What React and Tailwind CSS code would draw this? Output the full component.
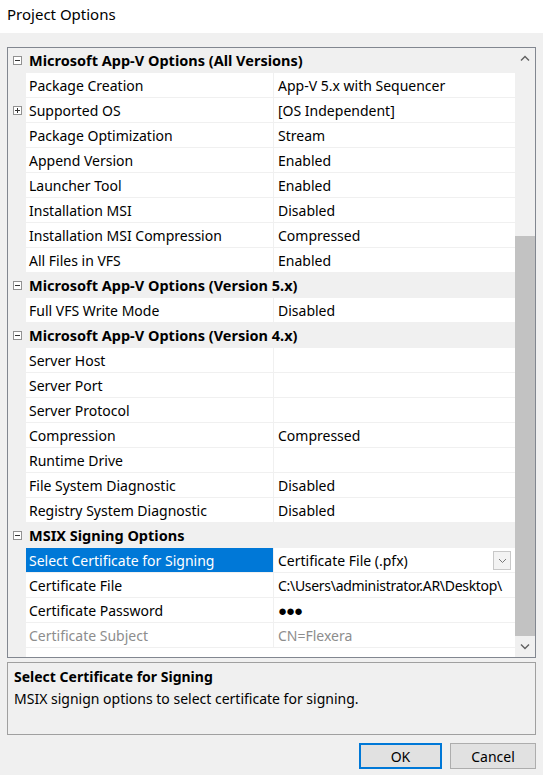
const rows = [
  { cat: 'Microsoft App-V Options (All Versions)' },
  { name: 'Package Creation', value: 'App-V 5.x with Sequencer' },
  { name: 'Supported OS', value: '[OS Independent]', plus: true },
  { name: 'Package Optimization', value: 'Stream' },
  { name: 'Append Version', value: 'Enabled' },
  { name: 'Launcher Tool', value: 'Enabled' },
  { name: 'Installation MSI', value: 'Disabled' },
  { name: 'Installation MSI Compression', value: 'Compressed' },
  { name: 'All Files in VFS', value: 'Enabled' },
  { cat: 'Microsoft App-V Options (Version 5.x)' },
  { name: 'Full VFS Write Mode', value: 'Disabled' },
  { cat: 'Microsoft App-V Options (Version 4.x)' },
  { name: 'Server Host', value: '' },
  { name: 'Server Port', value: '' },
  { name: 'Server Protocol', value: '' },
  { name: 'Compression', value: 'Compressed' },
  { name: 'Runtime Drive', value: '' },
  { name: 'File System Diagnostic', value: 'Disabled' },
  { name: 'Registry System Diagnostic', value: 'Disabled' },
  { cat: 'MSIX Signing Options' },
  { name: 'Select Certificate for Signing', value: 'Certificate File (.pfx)', selected: true, dropdown: true },
  { name: 'Certificate File', value: 'C:\\Users\\administrator.AR\\Desktop\\', path: true },
  { name: 'Certificate Password', value: '●●●' },
  { name: 'Certificate Subject', value: 'CN=Flexera', disabled: true },
]

function Toggle({ plus }) {
  return (
    <div className="w-[9px] h-[9px] border border-[#919191] bg-white flex items-center justify-center relative">
      <div className="absolute w-[5px] h-px bg-[#333]" />
      {plus && <div className="absolute w-px h-[5px] bg-[#333]" />}
    </div>
  )
}

function Row({ row }) {
  if (row.cat) {
    return (
      <div className="h-[25px] flex items-center bg-[#f0f0f0]">
        <div className="w-[18px] flex justify-center pl-px">
          <Toggle />
        </div>
        <div className="pl-[3px] pt-px font-bold text-[14.5px] text-[#000] whitespace-nowrap">{row.cat}</div>
      </div>
    )
  }
  return (
    <div className="h-[25px] flex">
      <div className="w-[18px] shrink-0 bg-[#f0f0f0] flex items-center justify-center pl-px">
        {row.plus && <Toggle plus />}
      </div>
      <div
        className={`w-[247px] shrink-0 flex items-center pl-[3px] pt-px border-b border-[#f0f0f0] whitespace-nowrap ${
          row.selected ? 'bg-[#0078d7] text-white' : row.disabled ? 'text-[#8d8d8d]' : 'text-black'
        }`}
      >
        {row.name}
      </div>
      <div className="w-px shrink-0 bg-[#f0f0f0]" />
      <div
        className={`flex-1 min-w-0 flex items-center pl-[4px] pt-px border-b border-[#f0f0f0] whitespace-nowrap ${
          row.disabled ? 'text-[#8d8d8d]' : 'text-black'
        }`}
      >
        <span
          className={
            row.value === '●●●' ? 'text-[15px] tracking-[-1px]' : row.path ? 'tracking-[-0.3px]' : ''
          }
        >
          {row.value}
        </span>
        {row.dropdown && (
          <div className="ml-auto mr-[4px] w-[18px] h-[19px] border border-[#c8c8c8] bg-[#f3f3f3] flex items-center justify-center">
            <svg width="9" height="6" viewBox="0 0 9 6" fill="none">
              <path d="M1 1l3.5 3.5L8 1" stroke="#777" strokeWidth="1" />
            </svg>
          </div>
        )}
      </div>
    </div>
  )
}

function Scrollbar() {
  return (
    <div className="w-[20px] shrink-0 bg-[#f0f0f0] flex flex-col">
      <div className="h-[20px] flex items-center justify-center">
        <svg width="10" height="7" viewBox="0 0 10 7" fill="none">
          <path d="M1 5.5l4-4 4 4" stroke="#606060" strokeWidth="1.4" />
        </svg>
      </div>
      <div className="h-[168px]" />
      <div className="flex-1 bg-[#c2c2c2]" />
      <div className="h-[21px] flex items-center justify-center">
        <svg width="10" height="7" viewBox="0 0 10 7" fill="none">
          <path d="M1 1.5l4 4 4-4" stroke="#606060" strokeWidth="1.4" />
        </svg>
      </div>
    </div>
  )
}

export default function App() {
  return (
    <div
      className="w-[543px] h-[775px] bg-[#f0f0f0] flex flex-col text-[14px] text-black overflow-hidden"
      style={{ fontFamily: '"Noto Sans", "Open Sans", sans-serif' }}
    >
      {/* Title bar */}
      <div className="h-[33px] bg-white flex items-center pl-[7px] pb-[4px] text-[15px]">Project Options</div>

      {/* Property grid */}
      <div className="mx-[7px] mt-[14px] h-[611px] border border-[#828790] bg-white flex">
        <div className="flex-1 min-w-0 flex flex-col">
          {rows.map((row, i) => (
            <Row key={i} row={row} />
          ))}
          <div className="flex-1 flex">
            <div className="w-[18px] bg-[#f0f0f0]" />
          </div>
        </div>
        <Scrollbar />
      </div>

      {/* Description */}
      <div className="mx-[7px] mt-[4px] h-[73px] border border-[#a0a0a0] px-[6px] pt-[4px]">
        <div className="font-bold leading-[20px]">Select Certificate for Signing</div>
        <div className="leading-[24px]">MSIX signign options to select certificate for signing.</div>
      </div>

      {/* Buttons */}
      <div className="flex justify-end gap-[8px] mr-[7px] mt-[8px]">
        <button className="w-[83px] h-[26px] bg-[#e1e1e1] border-2 border-[#0078d7] text-[14px]">OK</button>
        <button className="w-[86px] h-[26px] bg-[#e1e1e1] border border-[#adadad] text-[14px]">Cancel</button>
      </div>
    </div>
  )
}
